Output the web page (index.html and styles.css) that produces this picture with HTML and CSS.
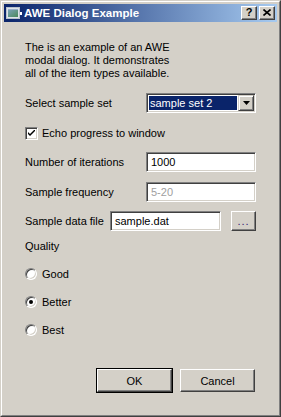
FILE: index.html
```html
<!DOCTYPE html>
<html lang="en">
<head>
    <meta charset="UTF-8">
    <meta name="viewport" content="width=device-width, initial-scale=1.0">
    <title>AWE Dialog Example</title>
    <link rel="stylesheet" href="styles.css">
</head>
<body>
    <div class="window">
        <div class="frame">
            <div class="titlebar">
                <svg class="app-icon" width="16" height="14" viewBox="0 0 16 14">
                    <defs>
                        <linearGradient id="appfill" x1="0" y1="0" x2="1" y2="1">
                            <stop offset="0" stop-color="#7aa2b8"/>
                            <stop offset="1" stop-color="#4a8a5a"/>
                        </linearGradient>
                    </defs>
                    <rect x="0.5" y="1.5" width="13" height="11" fill="#dde3ea" stroke="#b8c2cc"/>
                    <rect x="2" y="4" width="10" height="7" fill="url(#appfill)"/>
                    <rect x="2" y="3" width="10" height="1" fill="#9ab0c8"/>
                    <rect x="14" y="6" width="2" height="3" fill="#ffffff"/>
                </svg>
                <span class="title">AWE Dialog Example</span>
                <div class="title-buttons">
                    <span class="tb-btn">?</span>
                    <span class="tb-btn">
                        <svg width="8" height="7" viewBox="0 0 8 7"><path d="M0.5 0.5 L7.5 6.5 M7.5 0.5 L0.5 6.5" stroke="#000" stroke-width="1.6"/></svg>
                    </span>
                </div>
            </div>

            <div class="content">
                <p class="intro">The is an example of an AWE<br>modal dialog. It demonstrates<br>all of the item types available.</p>

                <div class="row row-select">
                    <span class="label">Select sample set</span>
                    <div class="combo">
                        <span class="combo-value">sample set 2</span>
                        <span class="combo-arrow">
                            <svg width="7" height="4" viewBox="0 0 7 4"><path d="M0 0 H7 L3.5 4 Z" fill="#000"/></svg>
                        </span>
                    </div>
                </div>

                <div class="row row-check">
                    <span class="checkbox">
                        <svg width="7" height="7" viewBox="0 0 7 7"><path d="M0 2 V4 L2 6 L7 1 V-1 L2 4 Z" fill="#000"/></svg>
                    </span>
                    <span class="check-label">Echo progress to window</span>
                </div>

                <div class="row row-iter">
                    <span class="label">Number of iterations</span>
                    <span class="field">1000</span>
                </div>

                <div class="row row-freq">
                    <span class="label">Sample frequency</span>
                    <span class="field disabled">5-20</span>
                </div>

                <div class="row row-file">
                    <span class="label short">Sample data file</span>
                    <span class="field file">sample.dat</span>
                    <span class="btn browse">...</span>
                </div>

                <div class="group-label">Quality</div>

                <div class="row radio-row first">
                    <span class="radio"></span>
                    <span class="check-label">Good</span>
                </div>
                <div class="row radio-row">
                    <span class="radio checked"></span>
                    <span class="check-label">Better</span>
                </div>
                <div class="row radio-row">
                    <span class="radio"></span>
                    <span class="check-label">Best</span>
                </div>

                <div class="footer">
                    <span class="btn default">OK</span>
                    <span class="btn">Cancel</span>
                </div>
            </div>
        </div>
    </div>
</body>
</html>
```

FILE: styles.css
```css
body {
    margin: 0;
    font-family: "Liberation Sans", Arial, sans-serif;
    font-size: 11px;
    color: #000;
    background: #d4d0c8;
}
.window {
    width: 281px;
    height: 417px;
    box-sizing: border-box;
    border: 1px solid;
    border-color: #d4d0c8 #404040 #404040 #d4d0c8;
    background: #d4d0c8;
}
.frame {
    height: 100%;
    box-sizing: border-box;
    border: 1px solid;
    border-color: #ffffff #808080 #808080 #ffffff;
    padding: 2px;
}
.titlebar {
    height: 18px;
    display: flex;
    align-items: center;
    padding: 0 2px;
    background: linear-gradient(to right, #0a246a, #a6caf0);
}
.app-icon {
    display: block;
    margin-right: 2px;
}
.title {
    color: #fff;
    font-weight: bold;
    font-size: 11.5px;
    flex: 1;
}
.title-buttons {
    display: flex;
    gap: 2px;
}
.tb-btn {
    width: 16px;
    height: 14px;
    box-sizing: border-box;
    border: 1px solid;
    border-color: #ffffff #404040 #404040 #ffffff;
    box-shadow: inset -1px -1px #808080;
    background: #d4d0c8;
    display: flex;
    align-items: center;
    justify-content: center;
    font-weight: bold;
    font-size: 11px;
    line-height: 1;
    padding-bottom: 1px;
}
.content {
    padding: 19px 21px 0 21px;
}
.intro {
    margin: 0;
    line-height: 13px;
}
.row {
    display: flex;
    align-items: center;
    height: 20px;
}
.row-select {
    margin-top: 13px;
}
.row-check {
    margin-top: 10px;
}
.row-iter {
    margin-top: 9px;
}
.row-freq {
    margin-top: 10px;
}
.row-file {
    margin-top: 9px;
}
.label {
    width: 121px;
}
.label.short {
    width: 85px;
}
.combo {
    width: 110px;
    height: 20px;
    box-sizing: border-box;
    border: 1px solid;
    border-color: #808080 #ffffff #ffffff #808080;
    box-shadow: inset 1px 1px #404040, inset -1px -1px #d4d0c8;
    background: #fff;
    display: flex;
    align-items: center;
    padding: 2px;
}
.combo-value {
    flex: 1;
    height: 14px;
    margin-right: 1px;
    background: #0a246a;
    color: #fff;
    line-height: 14px;
    padding-left: 1px;
}
.combo-arrow {
    width: 16px;
    height: 16px;
    box-sizing: border-box;
    margin-right: -1px;
    border: 1px solid;
    border-color: #d4d0c8 #404040 #404040 #d4d0c8;
    box-shadow: inset 1px 1px #fff, inset -1px -1px #808080;
    background: #d4d0c8;
    display: flex;
    align-items: center;
    justify-content: center;
}
.combo-arrow svg {
    display: block;
}
.checkbox {
    width: 13px;
    height: 13px;
    box-sizing: border-box;
    border: 1px solid;
    border-color: #808080 #ffffff #ffffff #808080;
    box-shadow: inset 1px 1px #404040, inset -1px -1px #d4d0c8;
    background: #fff;
    display: flex;
    align-items: center;
    justify-content: center;
}
.checkbox svg {
    display: block;
}
.check-label {
    margin-left: 4px;
}
.field {
    width: 110px;
    height: 20px;
    box-sizing: border-box;
    border: 1px solid;
    border-color: #808080 #ffffff #ffffff #808080;
    box-shadow: inset 1px 1px #404040, inset -1px -1px #d4d0c8;
    background: #fff;
    padding: 0 4px;
    line-height: 18px;
}
.field.disabled {
    color: #a0a0a0;
}
.field.file {
    width: 111px;
    padding-left: 4px;
}
.btn {
    width: 75px;
    height: 23px;
    box-sizing: border-box;
    border: 1px solid;
    border-color: #ffffff #404040 #404040 #ffffff;
    box-shadow: inset -1px -1px #808080;
    background: #d4d0c8;
    display: flex;
    align-items: center;
    justify-content: center;
}
.btn.browse {
    width: 25px;
    height: 20px;
    margin-left: 10px;
    align-items: flex-end;
    padding-bottom: 3px;
    letter-spacing: 1px;
    color: #302070;
}
.group-label {
    margin-top: 9px;
    line-height: 13px;
}
.radio-row {
    margin-top: 8px;
}
.radio-row.first {
    margin-top: 11px;
}
.radio {
    width: 12px;
    height: 12px;
    box-sizing: border-box;
    border-radius: 50%;
    border: 1px solid;
    border-color: #808080 #ffffff #ffffff #808080;
    box-shadow: inset 1px 1px #404040, inset -1px -1px #d4d0c8;
    background: #fff;
    display: flex;
    align-items: center;
    justify-content: center;
}
.radio.checked::after {
    content: "";
    width: 4px;
    height: 4px;
    border-radius: 50%;
    background: #000;
}
.radio-row .check-label {
    margin-left: 5px;
}
.footer {
    display: flex;
    justify-content: flex-end;
    gap: 8px;
    margin-top: 29px;
    margin-right: 1px;
}
.btn.default {
    box-shadow: inset -1px -1px #808080, 0 0 0 1px #000;
}
```
